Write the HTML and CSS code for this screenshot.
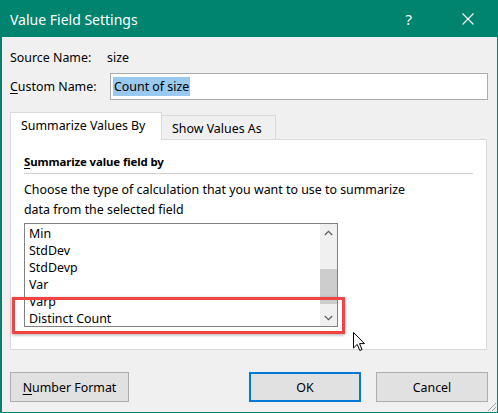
FILE: index.html
```html
<!DOCTYPE html>
<html>
<head>
<meta charset="utf-8">
<link rel="stylesheet" href="styles.css">
</head>
<body>
<div class="window">
  <div class="titlebar">
    <span class="title">Value Field Settings</span>
    <span class="help">?</span>
    <svg class="close" width="12" height="12" viewBox="0 0 12 12"><path d="M0.5 0.5 L11.5 11.5 M11.5 0.5 L0.5 11.5" stroke="#fff" stroke-width="1.1" fill="none"/></svg>
  </div>
  <div class="content">
    <div class="row source">
      <span class="label">Source Name:</span>
      <span class="value">size</span>
    </div>
    <div class="row custom">
      <span class="label"><u>C</u>ustom Name:</span>
      <div class="input"><span class="sel">Count of size</span></div>
    </div>
    <div class="tabs">
      <div class="tab active">Summarize Values By</div>
      <div class="tab">Show Values As</div>
    </div>
    <div class="panel">
      <div class="heading"><u>S</u>ummarize value field by</div>
      <div class="sep"></div>
      <div class="desc">Choose the type of calculation that you want to use to summarize<br>data from the selected field</div>
      <div class="listbox">
        <div class="items">
          <div class="item">Min</div>
          <div class="item">StdDev</div>
          <div class="item">StdDevp</div>
          <div class="item">Var</div>
          <div class="item">Varp</div>
          <div class="item">Distinct Count</div>
        </div>
        <div class="scrollbar">
          <div class="arrow"><svg width="9" height="6" viewBox="0 0 9 6"><path d="M0.8 5 L4.5 1.3 L8.2 5" stroke="#606060" stroke-width="1.3" fill="none"/></svg></div>
          <div class="track"><div class="thumb"></div></div>
          <div class="arrow"><svg width="9" height="6" viewBox="0 0 9 6"><path d="M0.8 1 L4.5 4.7 L8.2 1" stroke="#606060" stroke-width="1.3" fill="none"/></svg></div>
        </div>
      </div>
    </div>
    <div class="buttons">
      <div class="btn numfmt"><u>N</u>umber Format</div>
      <div class="spacer"></div>
      <div class="btn ok">OK</div>
      <div class="btn cancel">Cancel</div>
    </div>
  </div>
  <div class="highlight"></div>
  <svg class="cursor" width="13" height="20" viewBox="0 0 13 20"><path d="M0.5 0.5 L0.5 16 L4.2 12.4 L6.8 18.5 L9 17.5 L6.5 11.6 L11.5 11.6 Z" fill="#fff" stroke="#000" stroke-width="1"/></svg>
  <svg class="grip" width="12" height="12" viewBox="0 0 12 12"><path d="M11 3 L3 11 M11 7 L7 11" stroke="#a0a0a0" stroke-width="1"/></svg>
</div>
</body>
</html>
```
FILE: styles.css
```css
* { box-sizing: border-box; }
html, body { margin: 0; padding: 0; }
body { width: 498px; height: 413px; overflow: hidden; font-family: "Noto Sans", "Open Sans", sans-serif; font-size: 12.4px; color: #000; }
u { text-decoration: underline; text-underline-offset: 2px; }
.window { position: relative; width: 498px; height: 413px; border: 1px solid #00846f; border-left-width: 2px; background: #f0f0f0; display: flex; flex-direction: column; }
.titlebar { height: 36px; flex: none; background: #00846f; color: #fff; display: flex; align-items: center; padding-left: 8px; }
.title { font-size: 14px; flex: 1; }
.help { font-size: 15px; margin-right: 50px; }
.close { margin-right: 23px; }
.content { flex: 1; display: flex; flex-direction: column; padding: 0 9px 0 8px; }
.row { display: flex; align-items: center; }
.source { margin-top: 12px; height: 16px; }
.source .label { width: 97px; }
.custom { margin-top: 8px; }
.custom .label { width: 100px; }
.input { flex: 1; height: 27px; background: #fff; border: 1px solid #acacac; display: flex; align-items: center; padding-left: 2px; }
.sel { background: #99c9ef; padding: 0 1px; line-height: 19px; }
.tabs { display: flex; align-items: flex-end; margin-top: 12px; height: 28px; }
.tab { height: 25px; padding: 0 9px; border: 1px solid #d9d9d9; border-bottom: none; background: #f0f0f0; display: flex; align-items: center; margin-left: -1px; }
.tab.active { height: 28px; background: #fff; width: 152px; margin-left: 0; padding-left: 10px; position: relative; z-index: 1; padding-bottom: 3px; }
.tab:not(.active) { width: 115px; padding-left: 10px; }
.panel { height: 211px; margin-top: -1px; margin-right: 1px; background: #fff; border: 1px solid #d9d9d9; padding: 14px 13px 0 13px; display: flex; flex-direction: column; }
.heading { font-weight: bold; line-height: 16px; font-size: 11.4px; letter-spacing: -0.1px; }
.sep { height: 1px; background: #d0d0d0; margin-top: 3px; }
.desc { line-height: 20px; margin-top: 6px; }
.listbox { margin-top: 3px; width: 314px; height: 104px; border: 1px solid #828282; display: flex; background: #fff; }
.items { flex: 1; padding-left: 4px; padding-top: 1px; }
.item { height: 17px; line-height: 17px; }
.scrollbar { width: 17px; display: flex; flex-direction: column; background: #f0f0f0; }
.arrow { height: 17px; display: flex; align-items: center; justify-content: center; }
.track { flex: 1; position: relative; }
.thumb { position: absolute; left: 0; right: 0; top: 28px; height: 35px; background: #cdcdcd; }
.buttons { display: flex; margin-top: 22px; }
.btn { height: 30px; background: #e1e1e1; border: 1px solid #adadad; display: flex; align-items: center; justify-content: center; }
.numfmt { width: 119px; }
.spacer { flex: 1; }
.ok { width: 112px; border: 2px solid #0078d7; margin-right: 15px; }
.cancel { width: 112px; }
.highlight { position: absolute; left: 10px; top: 296px; width: 333px; height: 37px; border: 3px solid #f04343; box-shadow: 0 1px 3px rgba(0,0,0,0.35); }
.cursor { position: absolute; left: 351px; top: 331px; }
.grip { position: absolute; right: 0; bottom: 0; }
```
